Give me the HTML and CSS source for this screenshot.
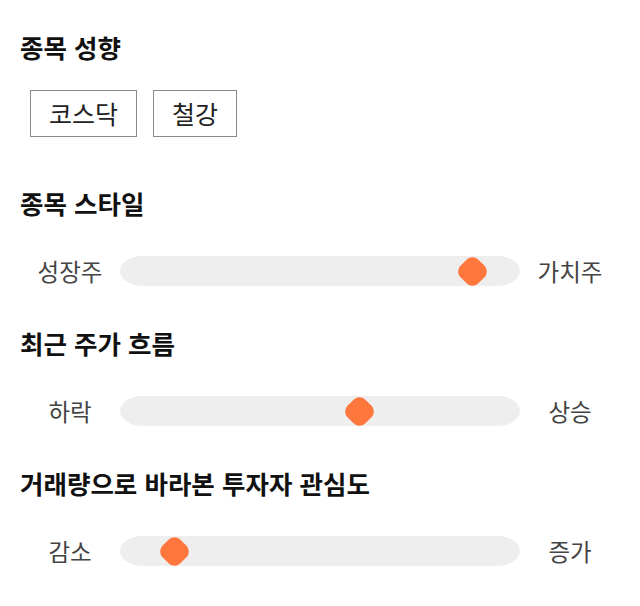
FILE: index.html
```html
<!DOCTYPE html>
<html lang="ko">
<head>
<meta charset="utf-8">
<link rel="stylesheet" href="styles.css">
</head>
<body>
<main class="page">
  <section class="section section-first">
    <h2 class="title">종목 성향</h2>
    <div class="chips">
      <span class="chip">코스닥</span>
      <span class="chip">철강</span>
    </div>
  </section>
  <section class="section section-chipsafter">
    <h2 class="title">종목 스타일</h2>
    <div class="row">
      <span class="label">성장주</span>
      <div class="track"><span class="thumb" style="left: 352px"></span></div>
      <span class="label">가치주</span>
    </div>
  </section>
  <section class="section">
    <h2 class="title">최근 주가 흐름</h2>
    <div class="row">
      <span class="label">하락</span>
      <div class="track"><span class="thumb" style="left: 239px"></span></div>
      <span class="label">상승</span>
    </div>
  </section>
  <section class="section">
    <h2 class="title">거래량으로 바라본 투자자 관심도</h2>
    <div class="row">
      <span class="label">감소</span>
      <div class="track"><span class="thumb" style="left: 54px"></span></div>
      <span class="label">증가</span>
    </div>
  </section>
</main>
</body>
</html>
```

FILE: styles.css
```css
* { box-sizing: border-box; }
html, body {
  margin: 0;
  padding: 0;
  background: #fff;
}
body {
  font-family: "Noto Sans CJK KR", "Noto Sans", sans-serif;
  color: #111;
}
.page {
  width: 640px;
  padding: 32px 20px 0 20px;
}
.section + .section {
  margin-top: 42px;
}
.section-chipsafter {
  margin-top: 51px !important;
}
.title {
  margin: 0;
  font-size: 25.5px;
  font-weight: 700;
  line-height: 30px;
  color: #111;
}
.chips {
  display: flex;
  gap: 16px;
  margin-top: 28px;
  padding-left: 10px;
}
.chip {
  display: inline-block;
  border: 1px solid #8a8a8a;
  padding: 6px 18px;
  font-size: 25px;
  line-height: 33px;
  color: #222;
}
.row {
  display: grid;
  grid-template-columns: 100px 1fr 100px;
  align-items: center;
  margin-top: 38px;
  height: 30px;
}
.label {
  text-align: center;
  font-size: 23.5px;
  line-height: 30px;
  color: #444;
}
.track {
  position: relative;
  height: 30px;
  background: #eeeeee;
  border-radius: 22px / 15px;
}
.thumb {
  position: absolute;
  top: 50%;
  width: 25px;
  height: 25px;
  margin-left: -12.5px;
  margin-top: -12.5px;
  background: #ff773d;
  border-radius: 8px;
  transform: rotate(45deg);
}
```
